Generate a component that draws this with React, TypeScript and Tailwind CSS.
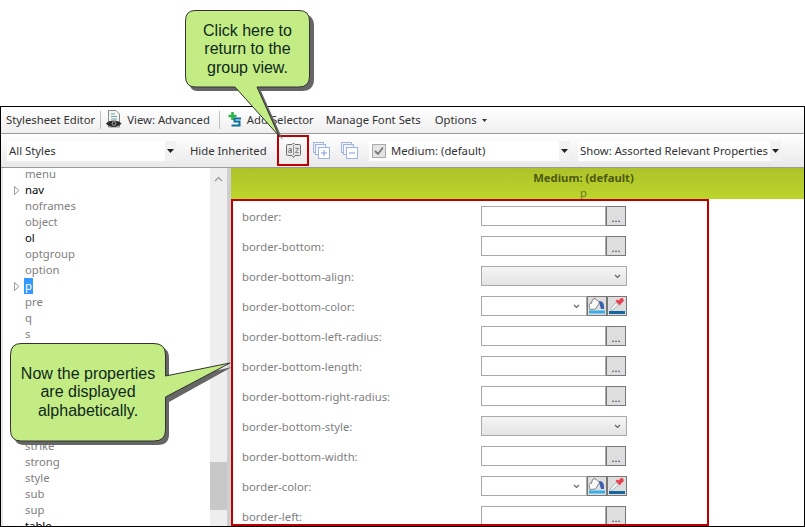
import React from "react";

const tree: [string, number][] = [
  ["menu", 0], ["nav", 2], ["noframes", 0], ["object", 0], ["ol", 1], ["optgroup", 0], ["option", 0], ["p", 3],
  ["pre", 0], ["q", 0], ["s", 0], ["", 0], ["", 0], ["", 0], ["", 0], ["", 0], ["", 0],
  ["strike", 0], ["strong", 0], ["style", 0], ["sub", 0], ["sup", 0], ["table", 1],
];

const rows: [string, "input" | "select" | "color"][] = [
  ["border:", "input"], ["border-bottom:", "input"], ["border-bottom-align:", "select"], ["border-bottom-color:", "color"],
  ["border-bottom-left-radius:", "input"], ["border-bottom-length:", "input"], ["border-bottom-right-radius:", "input"],
  ["border-bottom-style:", "select"], ["border-bottom-width:", "input"], ["border-color:", "color"], ["border-left:", "input"],
];

function Chevron({ className = "" }: { className?: string }) {
  return (
    <svg width="7" height="5" viewBox="0 0 7 5" className={className}>
      <path d="M1 1 L3.5 3.5 L6 1" fill="none" stroke="#666" strokeWidth="1.2" />
    </svg>
  );
}

function Caret() {
  return (
    <svg width="7" height="4" viewBox="0 0 7 4"><path d="M0 0H7L3.5 4Z" fill="#222" /></svg>
  );
}

function Bucket() {
  return (
    <svg width="18" height="18" viewBox="0 0 18 18" className="shrink-0">
      <path d="M6.5 1 L11.5 5.5 L7.5 12 L2 12.5 L1 8 Z" fill="#fbfbfb" stroke="#8a8a8a" />
      <path d="M3.5 7 C3.5 2 7 0 8.5 3" fill="none" stroke="#999" />
      <path d="M11 4 C15 4 16.5 7 16 12 L13 12 L11.5 7 Z" fill="#3a5fb0" />
      <rect x="1" y="13.5" width="16" height="3" fill="#36aee8" />
    </svg>
  );
}

function Dropper() {
  return (
    <svg width="18" height="18" viewBox="0 0 18 18" className="shrink-0">
      <path d="M2 12 L8 5.5 L10.5 8 L4 13.5 Z" fill="#f2f5f8" stroke="#9aa" strokeWidth="0.8" />
      <path d="M7.5 4 L12 8.5 L13 6.5 L15.5 4.5 C16.5 2.5 14.5 0 12.5 1.5 L10.5 3.5 L9 2.5 Z" fill="#e6404f" />
      <rect x="1" y="14" width="16" height="3" fill="#14679c" />
    </svg>
  );
}

function StackIcon({ sign }: { sign: "+" | "-" }) {
  return (
    <svg width="17" height="17" viewBox="0 0 17 17" fill="none" stroke="#9db4e8">
      <rect x="0.5" y="0.5" width="10" height="10" fill="#f4f6fb" />
      <rect x="2.5" y="2.5" width="10" height="10" fill="#f4f6fb" />
      <rect x="5.5" y="5.5" width="11" height="11" fill="#fff" />
      <path d={sign === "+" ? "M8 11H14M11 8V14" : "M8 11H14"} stroke="#7f9bdc" />
    </svg>
  );
}

function AzIcon() {
  return (
    <svg width="15" height="17" viewBox="0 0 15 17" fill="none" stroke="#6d6d6d">
      <path d="M1.5 2.5 H6 L7.5 1 L9 2.5 H13.5 Q14.5 2.5 14.5 3.5 V12.5 Q14.5 13.5 13.5 13.5 H9 L7.5 15.5 L6 13.5 H1.5 Q0.5 13.5 0.5 12.5 V3.5 Q0.5 2.5 1.5 2.5 Z" fill="#e8e8e8" />
      <path d="M7.5 3V13" stroke="#999" />
      <path d="M5.3 7 Q4 5.8 2.7 7 M5.3 6.8 V11 M5.3 8.4 Q2.2 8 2.2 9.8 Q2.6 11.4 5.3 10" strokeWidth="0.9" />
      <path d="M9.3 6.3H12.6L9.3 10.7H12.8" strokeWidth="0.9" />
    </svg>
  );
}

function PageIcon() {
  return (
    <svg width="16" height="20" viewBox="1 0 16 20">
      <path d="M3.5 0.5 H11 L14.5 4 V17 H3.5 Z" fill="#f4f4f4" stroke="#8a8a8a" />
      <path d="M6 4H10M6 6.5H12M6 9H12" stroke="#6fa5a8" />
      <path d="M1 13.5 C4 9.5 13 9.5 16.5 13.5 C13 18 4 18 1 13.5 Z" fill="#2c2c2c" />
      <circle cx="9" cy="13.5" r="2.4" fill="#8a8a8a" />
      <circle cx="9" cy="13.5" r="1.1" fill="#111" />
    </svg>
  );
}

function AddIcon() {
  return (
    <svg width="14" height="16" viewBox="0 0 14 16">
      <path d="M4.5 0V8M0.5 4H8.5" stroke="#2fb344" strokeWidth="2.6" />
      <path d="M13 6.5 H6.5 V9.5 H11.5 V13.5 H3.5" fill="none" stroke="#0e6f9e" strokeWidth="2" />
    </svg>
  );
}

function Select({ label, className }: { label: string; className: string }) {
  return (
    <div className={`flex h-5 items-center justify-between bg-white ${className}`}>
      <span className="whitespace-nowrap pt-px">{label}</span>
      <span className="flex h-5 w-[11px] items-center justify-center bg-[#f2f2f2]"><Caret /></span>
    </div>
  );
}

function Field({ type }: { type: "input" | "select" | "color" }) {
  if (type === "select") {
    return (
      <div className="flex h-5 w-[146px] items-center justify-end border border-[#a9a9a9] bg-gradient-to-b from-[#f5f5f5] to-[#e4e4e4] pr-[5px]">
        <Chevron />
      </div>
    );
  }
  if (type === "color") {
    return (
      <div className="flex h-5 w-[146px]">
        <div className="flex w-[106px] items-center justify-end border border-[#a9a9a9] bg-white pr-[6px]"><Chevron /></div>
        <div className="flex w-5 items-center justify-center border border-[#777] bg-[#dedede]"><Bucket /></div>
        <div className="flex w-5 items-center justify-center border border-[#777] bg-[#dedede]"><Dropper /></div>
      </div>
    );
  }
  return (
    <div className="flex h-5 w-[145px]">
      <div className="w-[125px] border border-[#a9a9a9] bg-white" />
      <div className="w-5 border border-[#777] bg-[#dedede] text-center text-[11px] leading-[22px] text-[#333]">...</div>
    </div>
  );
}

export default function App() {
  return (
    <div className="relative h-[527px] w-[805px] overflow-hidden bg-white font-['Noto_Sans','Open_Sans',sans-serif] text-[11.3px] whitespace-nowrap text-[#333]">
      <div className="h-[106px]" />
      <div className="flex h-[421px] flex-col border border-black">
        <div className="flex h-[27px] shrink-0 items-center gap-0 border-b border-[#9a9a9a] bg-gradient-to-b from-white to-[#efefef] pl-[5px]">
          <span>Stylesheet Editor</span>
          <span className="ml-[5px] h-[18px] w-px bg-[#c0c0c0]" />
          <span className="ml-[5px]"><PageIcon /></span>
          <span className="ml-[5px]">View: Advanced</span>
          <span className="ml-[9px] h-[18px] w-px bg-[#c0c0c0]" />
          <span className="ml-[8px]"><AddIcon /></span>
          <span className="ml-[5px]">Add Selector</span>
          <span className="ml-[12px]">Manage Font Sets</span>
          <span className="ml-[14px]">Options</span>
          <span className="ml-[5px]"><svg width="5" height="3" viewBox="0 0 5 3"><path d="M0 0H5L2.5 3Z" fill="#333" /></svg></span>
        </div>
        <div className="flex h-[34px] shrink-0 items-center border-b border-[#9a9a9a] bg-gradient-to-b from-white to-[#e9e9e9] pl-[6px]">
          <Select label="All Styles" className="w-[169px] pl-[2px]" />
          <span className="ml-[14px] w-[76px] pt-px">Hide Inherited</span>
          <div className="ml-[11px] flex h-[31px] w-[32px] shrink-0 items-center justify-center border-2 border-[#c00000]"><AzIcon /></div>
          <span className="ml-[4px]"><StackIcon sign="+" /></span>
          <span className="ml-[11px]"><StackIcon sign="-" /></span>
          <div className="ml-[11px] flex h-5 w-[201px] shrink-0 items-center justify-between bg-white pl-[3px]">
            <span className="flex items-center gap-[5px]">
              <span className="flex h-[14px] w-[14px] items-center justify-center border border-[#aaa] bg-[#e4e4e4]">
                <svg width="10" height="10" viewBox="0 0 10 10"><path d="M1 5 L4 8 L9 1.5" fill="none" stroke="#777" strokeWidth="1.8" /></svg>
              </span>
              <span className="pt-px">Medium: (default)</span>
            </span>
            <span className="flex h-5 w-[11px] items-center justify-center bg-[#f2f2f2]"><Caret /></span>
          </div>
          <Select label="Show: Assorted Relevant Properties" className="ml-[8px] w-[203px] pl-[2px]" />
        </div>
        <div className="flex min-h-0 flex-1">
          <div className="w-[2px] shrink-0 bg-[#e8e8e8]" />
          <div className="w-[207px] shrink-0 overflow-hidden bg-white">
            <div className="-mt-[2px]">
              {tree.map(([name, kind], i) => (
                <div key={i} className={`flex h-4 items-center pl-[21px] leading-4 ${kind ? "text-black" : "text-[#808080]"}`}>
                  <span className={kind === 3 ? "relative bg-[#3399ff] px-[1px] text-white" : "px-[1px]"}>{name}</span>
                  {kind >= 2 && (
                    <span className="absolute left-[14px]">
                      <svg width="6" height="9" viewBox="0 0 6 9"><path d="M0.5 0.5 L5 4.5 L0.5 8.5 Z" fill="#fff" stroke="#999" /></svg>
                    </span>
                  )}
                </div>
              ))}
            </div>
          </div>
          <div className="flex w-[17px] shrink-0 flex-col items-center bg-[#eeeeee]">
            <svg width="9" height="6" viewBox="0 0 9 6" className="mt-[8px]"><path d="M1 5 L4.5 1.5 L8 5" fill="none" stroke="#999" strokeWidth="1.2" /></svg>
            <div className="mt-[280px] h-[48px] w-full bg-[#c8c8c8]" />
          </div>
          <div className="w-[4px] shrink-0 bg-[#cfcfcf]" />
          <div className="flex min-w-0 flex-1 flex-col">
            <div className="flex h-[31px] shrink-0 flex-col items-center bg-gradient-to-b from-[#adc22a] to-[#bcd62c] pl-[132px] leading-[14px] text-[#4d5a10]">
              <span className="mt-[3px] font-bold">Medium: (default)</span>
              <span className="mt-[1px] text-[#6b7a20]">p</span>
            </div>
            <div className="w-[478px] min-h-0 flex-1 overflow-hidden border-2 border-[#c00000] pl-[9px] pt-[5px]">
              {rows.map(([label, type]) => (
                <div key={label} className="flex h-[30px] shrink-0 text-[#808080]">
                  <span className="w-[239px] pt-[3px]">{label}</span>
                  <Field type={type} />
                </div>
              ))}
            </div>
          </div>
        </div>
      </div>

      <svg width="805" height="527" className="pointer-events-none absolute left-0 top-0">
        <path d="M197 14 H302 Q314 14 314 26 V79 Q314 91 302 91 H261 L283 140 L239 91 H197 Q189 91 189 79 V26 Q189 14 197 14 Z" fill="#666" />
        <path d="M195 10.5 H299 Q309.5 10.5 309.5 21 V76 Q309.5 87 299 87 H257 L279 136 L235 87 H195 Q185.5 87 185.5 76 V21 Q185.5 10.5 195 10.5 Z" fill="#c3ec84" stroke="#333" />
        <path d="M24 347 H158 Q169 347 169 358 V434 Q169 445 158 445 H24 Q14 445 14 434 V358 Q14 347 24 347 Z" fill="#666" />
        <path d="M169 381 L232 367 L169 402 Z" fill="#666" />
        <path d="M21 343.5 H154 Q165.5 343.5 165.5 355 V376 L230 363 L165.5 397 V430 Q165.5 441 154 441 H21 Q10.5 441 10.5 430 V355 Q10.5 343.5 21 343.5 Z" fill="#c3ec84" stroke="#333" />
      </svg>
      <div className="absolute left-[186px] top-[22px] w-[123px] text-center font-['Liberation_Sans',sans-serif] text-[16px] leading-[18.4px] text-[#10281c]">
        Click here to<br />return to the<br />group view.
      </div>
      <div className="absolute left-[11px] top-[365px] w-[154px] text-center font-['Liberation_Sans',sans-serif] text-[16px] leading-[18.4px] text-[#10281c]">
        Now the properties<br />are displayed<br />alphabetically.
      </div>
    </div>
  );
}
